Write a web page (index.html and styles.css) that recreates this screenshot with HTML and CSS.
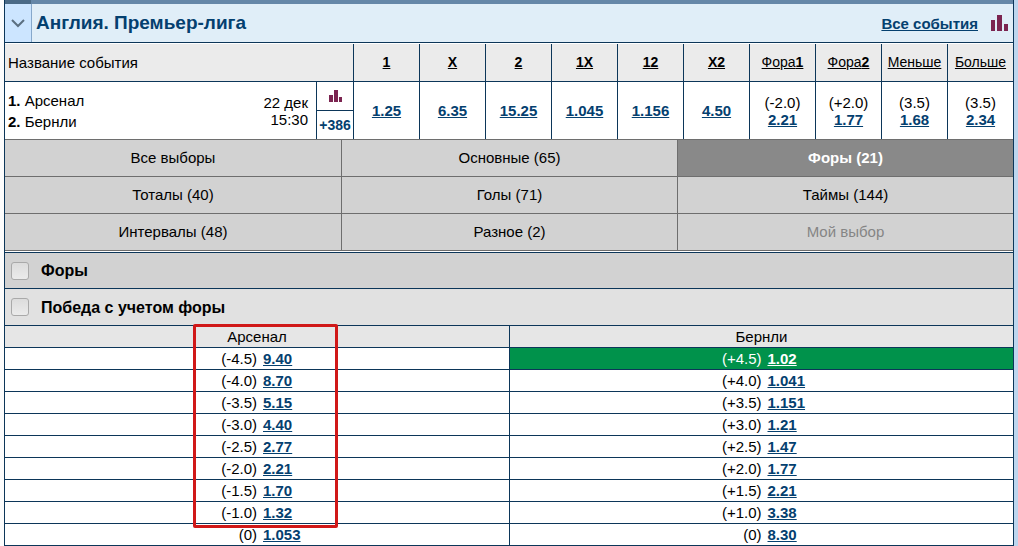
FILE: index.html
```html
<!DOCTYPE html>
<html lang="ru">
<head>
<meta charset="utf-8">
<title>Англия. Премьер-лига</title>
<meta name="viewport" content="width=device-width, initial-scale=1">
<link rel="stylesheet" href="styles.css">
</head>
<body>
<main class="coupon">
  <div class="strip"></div>
  <header class="league">
    <button class="toggle" type="button" aria-label="Свернуть">
      <svg width="14" height="9" viewBox="0 0 14 9" fill="none" stroke="#5b6f80" stroke-width="2"><path d="M1 1l6 6 6-6"/></svg>
    </button>
    <h1 class="league-name">Англия. Премьер-лига</h1>
    <a class="all-events" href="#">Все события</a>
    <a class="stats" href="#" aria-label="Статистика">
      <svg width="17" height="16" viewBox="0 0 17 16" fill="#7b2450"><path d="M0 5h4v11H0zM6 0h5v16H6zM13 9h4v7h-4z"/></svg>
    </a>
  </header>

  <table class="events">
    <colgroup><col><col class="col-more"><col class="col-odd" span="10"></colgroup>
    <thead>
      <tr>
        <th class="event-title" colspan="2">Название события</th>
        <th><a href="#"><b>1</b></a></th>
        <th><a href="#"><b>X</b></a></th>
        <th><a href="#"><b>2</b></a></th>
        <th><a href="#"><b>1X</b></a></th>
        <th><a href="#"><b>12</b></a></th>
        <th><a href="#"><b>X2</b></a></th>
        <th><a href="#">Фора<b>1</b></a></th>
        <th><a href="#">Фора<b>2</b></a></th>
        <th><a href="#">Меньше</a></th>
        <th><a href="#">Больше</a></th>
      </tr>
    </thead>
    <tbody>
      <tr>
        <td>
          <div class="match">
            <div class="teams"><div><b>1.</b> Арсенал</div><div><b>2.</b> Бернли</div></div>
            <div class="date">22 дек<br>15:30</div>
          </div>
        </td>
        <td class="more">
          <a class="more-stats" href="#" aria-label="Статистика матча">
            <svg width="13" height="12" viewBox="0 0 13 12" fill="#7b2450"><path d="M0 5h4v7H0zM5 0h4v12H5zM10 7h3v5h-3z"/></svg>
          </a>
          <a class="more-count" href="#">+386</a>
        </td>
        <td><a class="odd" href="#">1.25</a></td>
        <td><a class="odd" href="#">6.35</a></td>
        <td><a class="odd" href="#">15.25</a></td>
        <td><a class="odd" href="#">1.045</a></td>
        <td><a class="odd" href="#">1.156</a></td>
        <td><a class="odd" href="#">4.50</a></td>
        <td>(-2.0)<br><a class="odd" href="#">2.21</a></td>
        <td>(+2.0)<br><a class="odd" href="#">1.77</a></td>
        <td>(3.5)<br><a class="odd" href="#">1.68</a></td>
        <td>(3.5)<br><a class="odd" href="#">2.34</a></td>
      </tr>
    </tbody>
  </table>

  <nav class="tabs">
    <button class="tab" type="button">Все выборы</button>
    <button class="tab" type="button">Основные (65)</button>
    <button class="tab tab-active" type="button">Форы (21)</button>
    <button class="tab" type="button">Тоталы (40)</button>
    <button class="tab" type="button">Голы (71)</button>
    <button class="tab" type="button">Таймы (144)</button>
    <button class="tab" type="button">Интервалы (48)</button>
    <button class="tab" type="button">Разное (2)</button>
    <button class="tab" type="button" disabled>Мой выбор</button>
  </nav>

  <label class="group group-main"><input class="check" type="checkbox">Форы</label>
  <label class="group"><input class="check" type="checkbox">Победа с учетом форы</label>

  <div class="handicaps-wrap">
    <table class="handicaps">
      <thead><tr><th>Арсенал</th><th>Бернли</th></tr></thead>
      <tbody>
        <tr><td><div class="pair"><span>(-4.5)</span><a class="odd" href="#">9.40</a></div></td><td class="picked"><div class="pair"><span>(+4.5)</span><a class="odd" href="#">1.02</a></div></td></tr>
        <tr><td><div class="pair"><span>(-4.0)</span><a class="odd" href="#">8.70</a></div></td><td><div class="pair"><span>(+4.0)</span><a class="odd" href="#">1.041</a></div></td></tr>
        <tr><td><div class="pair"><span>(-3.5)</span><a class="odd" href="#">5.15</a></div></td><td><div class="pair"><span>(+3.5)</span><a class="odd" href="#">1.151</a></div></td></tr>
        <tr><td><div class="pair"><span>(-3.0)</span><a class="odd" href="#">4.40</a></div></td><td><div class="pair"><span>(+3.0)</span><a class="odd" href="#">1.21</a></div></td></tr>
        <tr><td><div class="pair"><span>(-2.5)</span><a class="odd" href="#">2.77</a></div></td><td><div class="pair"><span>(+2.5)</span><a class="odd" href="#">1.47</a></div></td></tr>
        <tr><td><div class="pair"><span>(-2.0)</span><a class="odd" href="#">2.21</a></div></td><td><div class="pair"><span>(+2.0)</span><a class="odd" href="#">1.77</a></div></td></tr>
        <tr><td><div class="pair"><span>(-1.5)</span><a class="odd" href="#">1.70</a></div></td><td><div class="pair"><span>(+1.5)</span><a class="odd" href="#">2.21</a></div></td></tr>
        <tr><td><div class="pair"><span>(-1.0)</span><a class="odd" href="#">1.32</a></div></td><td><div class="pair"><span>(+1.0)</span><a class="odd" href="#">3.38</a></div></td></tr>
        <tr><td><div class="pair"><span>(0)</span><a class="odd" href="#">1.053</a></div></td><td><div class="pair"><span>(0)</span><a class="odd" href="#">8.30</a></div></td></tr>
      </tbody>
    </table>
    <div class="highlight"></div>
  </div>
</main>
</body>
</html>
```
FILE: styles.css
```css
:root {
  --navy: #0c3659;
  --link: #04406f;
  --gray-line: #6e6e6e;
}

* { box-sizing: border-box; }

body {
  margin: 0;
  padding: 0 4px;
  background: linear-gradient(to left, #bdd6ee 4px, #fdfdfd 4px);
  font: 15px/17px "Liberation Sans", Arial, sans-serif;
  color: #000;
}

a { color: inherit; }

.coupon {
  border: solid var(--navy);
  border-width: 0 1px;
  background: #fff;
}

.strip {
  height: 4px;
  background: linear-gradient(to right, #4a6a86 26px, #6587a8 26px);
}

.league {
  display: flex;
  align-items: center;
  height: 39px;
  padding-right: 5px;
  background: #e0eef8;
  border-bottom: 1px solid var(--navy);
  color: var(--link);
}

.toggle {
  display: flex;
  align-items: center;
  justify-content: center;
  align-self: stretch;
  width: 27px;
  padding: 0;
  border: 0;
  border-right: 1px solid #86a8cb;
  background: #cce5ff;
}

.league-name {
  flex: 1;
  margin: 0 4px;
  font-size: 19px;
  line-height: 22px;
}

.all-events {
  margin-right: 13px;
  font-weight: bold;
}

.stats { display: flex; }

.events,
.handicaps {
  width: 100%;
  border-collapse: separate;
  border-spacing: 0;
  table-layout: fixed;
  text-align: center;
}

.events { margin-top: 1px; }
.col-more { width: 37px; }
.col-odd { width: 66px; }

.events th,
.events td {
  padding: 0;
  border-left: 1px solid var(--navy);
}

.events th:first-child,
.events td:first-child { border-left: 0; }

.events th {
  height: 38px;
  background: #ebebeb;
  border-bottom: 1px solid var(--navy);
  font-size: 14px;
  font-weight: normal;
}

.events .event-title {
  padding-left: 3px;
  text-align: left;
  font-size: 15px;
}

.events td { height: 57px; }

.match {
  display: flex;
  align-items: center;
  justify-content: space-between;
  padding: 0 8px 0 3px;
  text-align: left;
}

.teams { line-height: 21px; }
.date { text-align: right; }

.more-stats,
.more-count {
  display: flex;
  align-items: center;
  justify-content: center;
  height: 28px;
}

.more-stats {
  height: 29px;
  border-bottom: 1px solid var(--navy);
}

.more-count {
  color: var(--link);
  font-size: 14px;
  font-weight: bold;
  text-decoration: none;
}

.odd {
  color: var(--link);
  font-weight: bold;
}

.tabs {
  display: grid;
  grid-template-columns: repeat(3, 1fr);
  margin-bottom: 1px;
  border-bottom: 1px solid var(--gray-line);
}

.tab {
  height: 37px;
  padding: 0 0 2px;
  border: 0;
  border-top: 1px solid var(--gray-line);
  border-left: 1px solid var(--gray-line);
  background: #d2d2d2;
  color: #000;
  font: inherit;
}

.tab:nth-child(3n + 1) { border-left: 0; }
.tab:disabled { color: #858585; }

.tab-active {
  background: #898989;
  color: #fff;
  font-weight: bold;
}

.group {
  display: flex;
  align-items: center;
  gap: 12px;
  height: 37px;
  padding-left: 6px;
  border-top: 1px solid var(--navy);
  background: #e1e1e1;
  font-size: 16px;
  font-weight: bold;
}

.group-main {
  height: 36px;
  background: #d2d2d2;
}

.check {
  appearance: none;
  width: 18px;
  height: 18px;
  margin: 0;
  border: 1px solid #a9a9a9;
  border-radius: 3px;
  background: linear-gradient(#dcdcdc, #ebebeb);
}

.handicaps-wrap {
  position: relative;
  border-top: 1px solid var(--navy);
}

.handicaps th,
.handicaps td {
  height: 22px;
  padding: 0;
  border-bottom: 1px solid var(--navy);
}

.handicaps th {
  background: #e6e6e6;
  font-weight: normal;
}

.handicaps th:last-child,
.handicaps td:last-child { border-left: 1px solid var(--navy); }

.pair {
  display: grid;
  grid-template-columns: 1fr 1fr;
}

.pair span { text-align: right; }

.pair a {
  justify-self: start;
  margin-left: 6px;
}

.handicaps .picked { background: #00924b; }
.picked,
.picked .odd { color: #fff; }

.highlight {
  position: absolute;
  top: -2px;
  bottom: 18px;
  left: calc(25% - 64px);
  width: 145px;
  border: 3px solid #d01818;
  border-radius: 2px;
  pointer-events: none;
}
```
